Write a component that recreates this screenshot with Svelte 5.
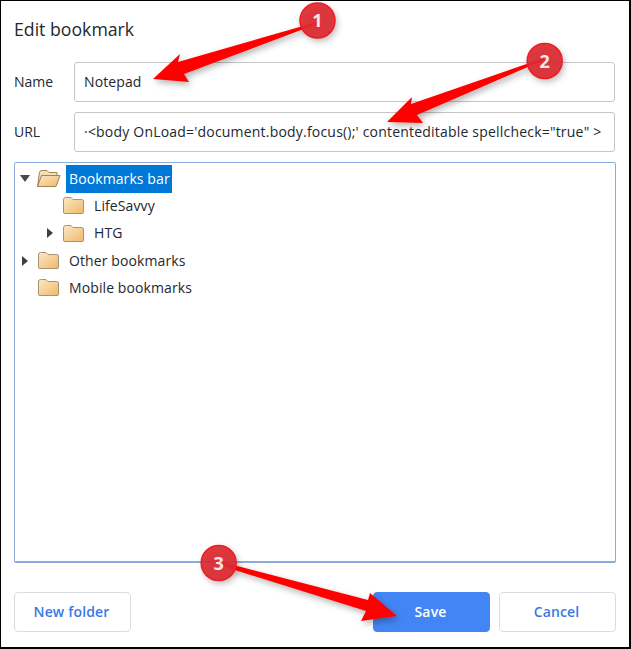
<script>
  const tree = [
    { label: 'Bookmarks bar', depth: 0, open: true, selected: true, arrow: 'down' },
    { label: 'LifeSavvy', depth: 1 },
    { label: 'HTG', depth: 1, arrow: 'right' },
    { label: 'Other bookmarks', depth: 0, arrow: 'right' },
    { label: 'Mobile bookmarks', depth: 0 }
  ];
  const arrows = [
    { points: '317,22 178,62 180,54 153,79 189,82 184,74 317,24', cx: 317.5, cy: 20.5, n: 1 },
    { points: '544,58 411,104 412,97 387,122 423,123 417,115 544,60', cx: 544.7, cy: 61, n: 2 },
    { points: '222,562 368,600 370,593 397,616 361,621 366,611 222,566', cx: 218.7, cy: 563, n: 3 }
  ];
</script>

<div class="window">
  <h1>Edit bookmark</h1>
  <div class="field">
    <span class="label">Name</span>
    <div class="input">Notepad</div>
  </div>
  <div class="field second">
    <span class="label">URL</span>
    <div class="input url">·&lt;body OnLoad='document.body.focus();' contenteditable spellcheck="true" &gt;</div>
  </div>
  <div class="tree">
    {#each tree as row}
      <div class="row" class:nested={row.depth === 1}>
        <span class="twist">
          {#if row.arrow === 'down'}
            <svg width="10" height="7" viewBox="0 0 10 7"><path d="M0 0h10L5 7z" fill="#4a4a4a" /></svg>
          {:else if row.arrow === 'right'}
            <svg width="6" height="10" viewBox="0 0 6 10"><path d="M0 0v10L6 5z" fill="#404040" /></svg>
          {/if}
        </span>
        <svg class="folder" width="25" height="19" viewBox="0 0 25 19">
          <defs>
            <linearGradient id="fg-{row.label.length}" x1="0" y1="0" x2="1" y2="1">
              <stop offset="0" stop-color="#fde9c8" />
              <stop offset="1" stop-color="#eeb868" />
            </linearGradient>
          </defs>
          {#if row.open}
            <path d="M1.5 17.5 L3.5 3.5 Q3.7 1.5 5.5 1.5 H11 L13 3.5 H21 V7 H6 Z" fill="#f6dfb4" stroke="#a08455" />
            <path d="M1.5 17.5 L5.5 6.5 H24 L20 17.5 Z" fill="url(#fg-{row.label.length})" stroke="#a08455" />
          {:else}
            <path d="M2.5 4 Q2.5 1.5 4.5 1.5 H10 L12 3.5 H20.5 Q22.5 3.5 22.5 5 V16.5 Q22.5 17.5 21 17.5 H4 Q2.5 17.5 2.5 16.5 Z" fill="url(#fg-{row.label.length})" stroke="#a89272" />
          {/if}
        </svg>
        <span class="name" class:selected={row.selected}>{row.label}</span>
      </div>
    {/each}
  </div>
  <div class="buttons">
    <button class="btn">New folder</button>
    <div class="right">
      <button class="btn primary">Save</button>
      <button class="btn">Cancel</button>
    </div>
  </div>

  <svg class="overlay" width="631" height="649" viewBox="0 0 631 649">
    <defs>
      <filter id="sh" x="-20%" y="-20%" width="140%" height="140%">
        <feDropShadow dx="2" dy="3" stdDeviation="3" flood-color="#000" flood-opacity="0.3" />
      </filter>
      <filter id="blur" x="-30%" y="-30%" width="160%" height="160%">
        <feGaussianBlur stdDeviation="3" />
      </filter>
    </defs>
    {#each arrows as a}
      <circle cx={a.cx + 2} cy={a.cy + 3} r="18" fill="#000" fill-opacity="0.25" filter="url(#blur)" />
      <polygon points={a.points} fill="#fe0000" filter="url(#sh)" />
      <circle cx={a.cx} cy={a.cy} r="17.5" fill="#dc2a31" fill-opacity="0.92" stroke="#f01c24" stroke-width="1.5" />
      <text x={a.cx} y={a.cy + 6.5} text-anchor="middle" class="num">{a.n}</text>
    {/each}
  </svg>
</div>

<style>
  :global(body) { margin: 0; background: #fff; }
  .window {
    position: relative;
    box-sizing: border-box;
    width: 631px;
    height: 649px;
    background: #fff;
    border: solid #000;
    border-width: 1px 2px 2px 1px;
    padding: 15px 13px 0 13px;
    font-family: "Open Sans", "Noto Sans", sans-serif;
    color: #23282f;
    overflow: hidden;
  }
  h1 { margin: 0 0 18px; font-size: 17.7px; font-weight: 400; line-height: 26px; height: 28px; }
  .field { display: flex; align-items: center; height: 40px; margin-right: 1px; }
  .second { margin-top: 10px; }
  .label { width: 60px; font-size: 14px; padding-bottom: 2px; }
  .input {
    flex: 1;
    height: 40px;
    box-sizing: border-box;
    border: 1px solid #c6c6c6;
    border-radius: 3px;
    padding: 0 9px 2px;
    display: flex;
    align-items: center;
    font-size: 14px;
    letter-spacing: 0.1px;
    white-space: nowrap;
    overflow: hidden;
  }
  .url { letter-spacing: 0.2px; }
  .tree {
    margin-top: 10px;
    height: 401px;
    box-sizing: border-box;
    border: 1px solid #8eaadb;
    border-bottom-width: 2px;
    border-radius: 2px;
    padding: 2px 0 0 4px;
  }
  .row { display: flex; align-items: center; height: 27.3px; font-size: 14px; letter-spacing: 0.1px; }
  .nested { padding-left: 25px; }
  .twist { box-sizing: border-box; width: 18px; padding-right: 6px; display: flex; justify-content: center; flex: none; }
  .folder { flex: none; margin-right: 5px; margin-left: -1px; }
  .name { padding: 0 2px 0 3px; line-height: 28px; }
  .selected { background: #0078d7; color: #fff; }
  .buttons { display: flex; justify-content: space-between; margin-top: 29px; }
  .right { display: flex; gap: 9px; }
  .btn {
    width: 117px;
    height: 40px;
    background: #fff;
    border: 1px solid #dadce0;
    border-radius: 4px;
    padding: 0 2px 2px 0;
    color: #3b78e7;
    font: 600 14px "Open Sans", "Noto Sans", sans-serif;
    letter-spacing: 0.15px;
  }
  .primary { background: #4285f4; border-color: #4285f4; color: #fff; }
  .overlay { position: absolute; left: -1px; top: -1px; pointer-events: none; }
  .num { font: 700 18px "Open Sans", sans-serif; fill: #fbe4e4; }
</style>
